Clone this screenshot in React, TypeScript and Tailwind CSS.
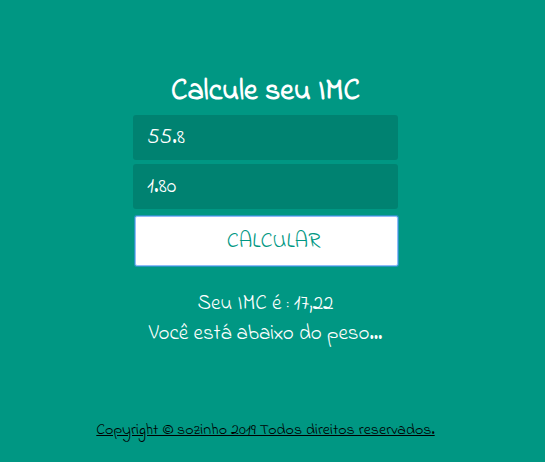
import { useState } from "react";
import type { FormEvent } from "react";

const fieldClass =
  "block h-[45px] w-full rounded-[3px] bg-[#008271] px-3.5 text-[22px] leading-6 text-white outline-none";

function describe(imc: number): string {
  if (imc < 18.5) return "Você está abaixo do peso...";
  if (imc < 25) return "Você está no peso ideal!";
  return "Você está acima do peso...";
}

export default function App() {
  const [weight, setWeight] = useState("55.8");
  const [height, setHeight] = useState("1.80");
  const [imc, setImc] = useState(17.22);

  function calculate(event: FormEvent) {
    event.preventDefault();
    const value = Number(weight) / (Number(height) * Number(height));
    if (Number.isFinite(value)) setImc(value);
  }

  return (
    <div className="flex min-h-screen flex-col items-center bg-[#009783] pt-[75px] pr-3.5 pb-5 font-['Indie_Flower','Lato',sans-serif] text-white">
      <main className="w-full max-w-[265px]">
        <h1 className="mb-1.5 text-center text-[30px] leading-[34px] font-bold">Calcule seu IMC</h1>
        <form onSubmit={calculate} className="flex flex-col gap-1">
          <input
            aria-label="Peso"
            className={fieldClass}
            value={weight}
            onChange={(event) => setWeight(event.target.value)}
          />
          <input
            aria-label="Altura"
            className={fieldClass}
            value={height}
            onChange={(event) => setHeight(event.target.value)}
          />
          <button
            type="submit"
            className="mt-[3px] ml-0.5 h-[50px] rounded-[2px] border border-[#8fbcf8] bg-white pt-0.5 pl-3.5 text-[22px] leading-6 text-[#009783] ring-1 ring-[#3a96d8]/70"
          >
            CALCULAR
          </button>
        </form>
        <div className="mt-[23px] text-center text-[21px] leading-[30px] whitespace-nowrap">
          <p>Seu IMC é : {imc.toFixed(2).replace(".", ",")}</p>
          <p>{describe(imc)}</p>
        </div>
      </main>
      <footer className="mt-auto">
        <p className="text-center text-[16px] leading-6 text-black underline">
          Copyright © sozinho 2019 Todos direitos reservados.
        </p>
      </footer>
    </div>
  );
}
